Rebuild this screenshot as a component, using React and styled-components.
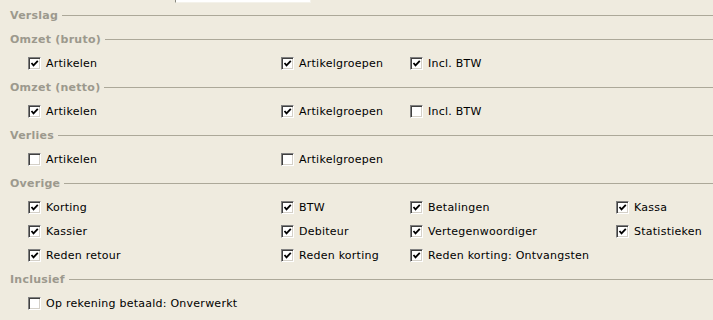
import React from "react";
import styled, { createGlobalStyle } from "styled-components";

const Global = createGlobalStyle`
  html, body {
    margin: 0;
    padding: 0;
    background: #efebdf;
  }
  body {
    font-family: "DejaVu Sans", Verdana, sans-serif;
    font-size: 11px;
    letter-spacing: 0.25px;
    color: #000;
  }
`;

const Page = styled.div`
  width: 713px;
  height: 320px;
  overflow: hidden;
  background: #efebdf;
`;

const FieldStub = styled.div`
  margin-left: 175px;
  width: 136px;
  height: 3px;
  box-sizing: border-box;
  background: #fff;
  border-left: 1px solid #8a8a80;
  border-right: 1px solid #f4f2ea;
  border-bottom: 1px solid #f4f2ea;
`;

const Heading = styled.div`
  display: flex;
  align-items: center;
  height: 24px;
  padding-left: 10px;
  font-weight: bold;
  font-size: 11px;
  color: #9c998d;
  &::after {
    content: "";
    flex: 1;
    height: 1px;
    margin-left: 4px;
    background: #aca899;
  }
`;

const Grid = styled.div`
  display: grid;
  grid-template-columns: 253px 129px 206px 1fr;
  grid-auto-rows: 24px;
  padding-left: 28px;
`;

const Item = styled.label`
  display: flex;
  align-items: center;
  gap: 5px;
  white-space: nowrap;
  grid-column: ${(p) => p.col};
`;

const Box = styled.span`
  display: inline-flex;
  align-items: center;
  justify-content: center;
  width: 13px;
  height: 13px;
  box-sizing: border-box;
  background: #fff;
  border-top: 1px solid #808080;
  border-left: 1px solid #808080;
  border-right: 1px solid #fff;
  border-bottom: 1px solid #fff;
  box-shadow: inset 1px 1px 0 #404040, inset -1px -1px 0 #d4d0c8;
  flex: none;
`;

const Check = ({ on }) => (
  <Box>
    {on && (
      <svg width="11" height="11" viewBox="0 0 11 11">
        <path d="M2.5 5 L4.5 7.3 L8.8 2.8" fill="none" stroke="#000" strokeWidth="1.8" />
      </svg>
    )}
  </Box>
);

const Option = ({ col, on, children }) => (
  <Item col={col}>
    <Check on={on} />
    <span>{children}</span>
  </Item>
);

const App = () => (
  <Page>
    <Global />
    <FieldStub />
    <Heading>Verslag</Heading>
    <Heading>Omzet (bruto)</Heading>
    <Grid>
      <Option col={1} on>Artikelen</Option>
      <Option col={2} on>Artikelgroepen</Option>
      <Option col={3} on>Incl. BTW</Option>
    </Grid>
    <Heading>Omzet (netto)</Heading>
    <Grid>
      <Option col={1} on>Artikelen</Option>
      <Option col={2} on>Artikelgroepen</Option>
      <Option col={3}>Incl. BTW</Option>
    </Grid>
    <Heading>Verlies</Heading>
    <Grid>
      <Option col={1}>Artikelen</Option>
      <Option col={2}>Artikelgroepen</Option>
    </Grid>
    <Heading>Overige</Heading>
    <Grid>
      <Option col={1} on>Korting</Option>
      <Option col={2} on>BTW</Option>
      <Option col={3} on>Betalingen</Option>
      <Option col={4} on>Kassa</Option>
      <Option col={1} on>Kassier</Option>
      <Option col={2} on>Debiteur</Option>
      <Option col={3} on>Vertegenwoordiger</Option>
      <Option col={4} on>Statistieken</Option>
      <Option col={1} on>Reden retour</Option>
      <Option col={2} on>Reden korting</Option>
      <Option col={3} on>Reden korting: Ontvangsten</Option>
    </Grid>
    <Heading>Inclusief</Heading>
    <Grid>
      <Option col={1}>Op rekening betaald: Onverwerkt</Option>
    </Grid>
  </Page>
);

export default App;
